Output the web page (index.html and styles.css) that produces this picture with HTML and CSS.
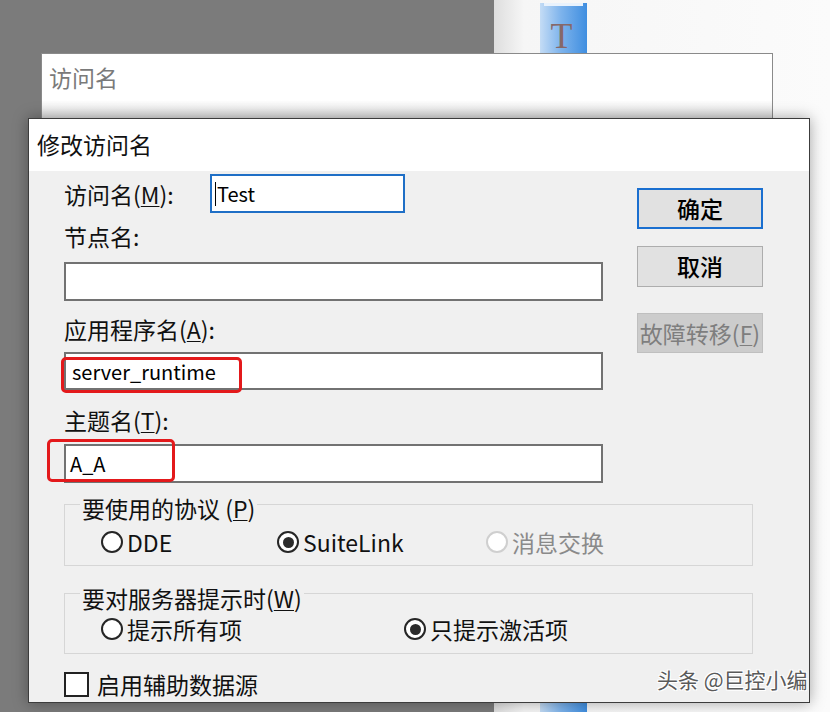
FILE: index.html
```html
<!DOCTYPE html>
<html lang="zh-CN">
<head>
  <meta charset="UTF-8">
  <meta name="viewport" content="width=device-width, initial-scale=1.0">
  <title>修改访问名</title>
  <link rel="stylesheet" href="styles.css">
</head>
<body>

<div class="desktop">
  <div class="gray-area"></div>
  <div class="side-panel">
    <div class="tool-bar">
      <div class="bar-stripe"></div>
      <div class="tool-t">T</div>
    </div>
  </div>

  <div class="back-window">
    <div class="back-title">访问名</div>
  </div>

  <div class="dialog">
    <div class="dialog-title">修改访问名</div>

    <div class="dialog-body">
      <div class="top-area">
        <div class="form-col">
          <div class="row-access">
            <label class="lbl lbl-access">访问名(<u>M</u>):</label>
            <div class="input input-focus"><span class="caret"></span>Test</div>
          </div>

          <label class="lbl lbl-node">节点名:</label>
          <div class="input input-node"></div>

          <label class="lbl lbl-app">应用程序名(<u>A</u>):</label>
          <div class="input input-app">
            server_runtime
            <span class="mark mark-app"></span>
          </div>

          <label class="lbl lbl-topic">主题名(<u>T</u>):</label>
          <div class="input input-topic">
            A_A
            <span class="mark mark-topic"></span>
          </div>
        </div>

        <div class="btn-col">
          <button class="btn btn-default">确定</button>
          <button class="btn btn-cancel">取消</button>
          <button class="btn btn-disabled">故障转移(<u>F</u>)</button>
        </div>
      </div>

      <div class="group group-protocol">
        <div class="group-title">要使用的协议 (<u>P</u>)</div>
        <div class="radio-row">
          <div class="radio"><span class="dot"></span>DDE</div>
          <div class="radio"><span class="dot checked"></span>SuiteLink</div>
          <div class="radio disabled"><span class="dot"></span>消息交换</div>
        </div>
      </div>

      <div class="group group-notify">
        <div class="group-title">要对服务器提示时(<u>W</u>)</div>
        <div class="radio-row">
          <div class="radio"><span class="dot"></span>提示所有项</div>
          <div class="radio"><span class="dot checked"></span>只提示激活项</div>
        </div>
      </div>

      <div class="check-row">
        <span class="box"></span>启用辅助数据源
      </div>
    </div>
  </div>

  <div class="watermark">头条 @巨控小编</div>
</div>

</body>
</html>
```

FILE: styles.css
```css
* {
  margin: 0;
  padding: 0;
  box-sizing: border-box;
}

body {
  background: #7b7b7b;
  font-family: "Noto Sans CJK SC", "Noto Sans", sans-serif;
  font-size: 23px;
  color: #111;
  overflow: hidden;
}

.desktop {
  position: relative;
  width: 830px;
  height: 712px;
  display: flex;
}

.gray-area {
  width: 494px;
  background: #7b7b7b;
}

.side-panel {
  flex: 1;
  background: linear-gradient(to right, #dedede, #f6f6f6 30px, #fbfbfb);
  padding-left: 46px;
}

.tool-bar {
  width: 47px;
  height: 100%;
  background: linear-gradient(to right, #c4dcf5, #7db3ec 45%, #3f8ee0);
}

.bar-stripe {
  height: 3px;
  margin: 3px 4px 0;
  background: #e9f2fc;
}

.tool-t {
  margin-top: 12px;
  text-align: center;
  font-family: "Liberation Serif", serif;
  font-size: 36px;
  line-height: 36px;
  color: #86686a;
  padding-right: 4px;
}

/* window behind the dialog */
.back-window {
  position: absolute;
  left: 41px;
  top: 53px;
  width: 732px;
  height: 140px;
  border: 1px solid #8a8a8a;
  background: linear-gradient(#fff, #fff 46px, #d8d8d8 66px);
}

.back-title {
  padding: 8px 0 0 7px;
  line-height: 30px;
  color: #7a7a7a;
}

/* main dialog */
.dialog {
  position: absolute;
  left: 28px;
  top: 118px;
  width: 782px;
  height: 585px;
  border: 1px solid #3c3c3c;
  background: #f0f0f0;
  box-shadow: 0 0 14px rgba(0, 0, 0, 0.35);
}

.dialog-title {
  height: 52px;
  line-height: 50px;
  padding-left: 8px;
  background: #fff;
}

.dialog-body {
  padding: 0 46px 0 35px;
}

.top-area {
  display: flex;
  gap: 34px;
}

.form-col {
  width: 539px;
  display: flex;
  flex-direction: column;
}

.lbl {
  display: block;
  line-height: 24px;
  height: 24px;
}

.row-access {
  display: flex;
  align-items: center;
  margin-top: 3px;
  height: 39px;
}

.lbl-access {
  width: 146px;
}

.lbl-node { margin-top: 11px; }
.lbl-app { margin-top: 16px; }
.lbl-topic { margin-top: 18px; }

.input {
  position: relative;
  background: #fff;
  border: 2px solid #727272;
  height: 39px;
  display: flex;
  align-items: center;
  padding-left: 6px;
  font-size: 20px;
  color: #000;
}

.input-focus {
  width: 195px;
  border-color: #1f6fc6;
  padding-left: 3px;
}

.caret {
  width: 1px;
  height: 24px;
  background: #000;
  margin-right: 1px;
}

.input-node { margin-top: 14px; }
.input-app { margin-top: 11px; height: 38px; }
.input-topic { margin-top: 12px; padding-left: 4px; }

/* red highlight boxes drawn over the fields */
.mark {
  position: absolute;
  border: 3px solid #e3191b;
  border-radius: 5px;
}

.mark-app {
  left: -5px;
  top: 3px;
  width: 181px;
  height: 36px;
}

.mark-topic {
  left: -19px;
  top: -7px;
  width: 128px;
  height: 43px;
}

.btn-col {
  width: 126px;
  display: flex;
  flex-direction: column;
}

.btn {
  font-family: inherit;
  font-size: 23px;
  font-weight: 500;
  height: 41px;
  background: #e1e1e1;
  border: 1px solid #adadad;
  color: #000;
  line-height: 1;
  white-space: nowrap;
}

.btn-default {
  margin-top: 17px;
  border: 2px solid #1a6fd0;
}

.btn-cancel {
  margin-top: 17px;
}

.btn-disabled {
  margin-top: 26px;
  height: 40px;
  background: #cccccc;
  border-color: #bfbfbf;
  color: #7e7e7e;
  font-weight: 400;
}

u {
  text-decoration: underline;
  text-underline-offset: 2px;
  text-decoration-thickness: 1px;
}

/* group boxes */
.group {
  width: 689px;
  border: 1px solid #d6d6d6;
}

.group-protocol {
  margin-top: 21px;
  height: 62px;
}

.group-notify {
  margin-top: 27px;
  height: 61px;
}

.group-title {
  width: fit-content;
  margin-left: 15px;
  padding: 0 2px;
  background: #f0f0f0;
  line-height: 22px;
}

.group-protocol .group-title { margin-top: -8px; }
.group-notify .group-title { margin-top: -7px; }

.radio-row {
  display: grid;
  padding-left: 36px;
  height: 24px;
  line-height: 24px;
}

.group-protocol .radio-row {
  margin-top: 11px;
  grid-template-columns: 176px 209px auto;
}

.group-notify .radio-row {
  margin-top: 8px;
  grid-template-columns: 303px auto;
}

.radio {
  display: flex;
  align-items: center;
  gap: 4px;
}

.dot {
  flex: none;
  width: 22px;
  height: 22px;
  border-radius: 50%;
  border: 2px solid #262626;
  background: #fff;
  display: flex;
  align-items: center;
  justify-content: center;
}

.dot.checked::after {
  content: "";
  width: 11px;
  height: 11px;
  border-radius: 50%;
  background: #2b2b2b;
}

.radio.disabled {
  color: #8a8a8a;
}

.radio.disabled .dot {
  border-color: #cfcfcf;
}

.check-row {
  margin-top: 18px;
  display: flex;
  align-items: center;
  gap: 8px;
  height: 25px;
  line-height: 25px;
}

.box {
  flex: none;
  width: 25px;
  height: 25px;
  border: 2px solid #222;
  background: #fff;
}

.watermark {
  position: absolute;
  left: 657px;
  top: 666px;
  font-size: 21px;
  line-height: 26px;
  color: #5a5a5a;
  text-shadow: 1px 1px 0 #fff, -1px -1px 0 #fff, 1px -1px 0 #fff, -1px 1px 0 #fff;
  white-space: nowrap;
}
```
